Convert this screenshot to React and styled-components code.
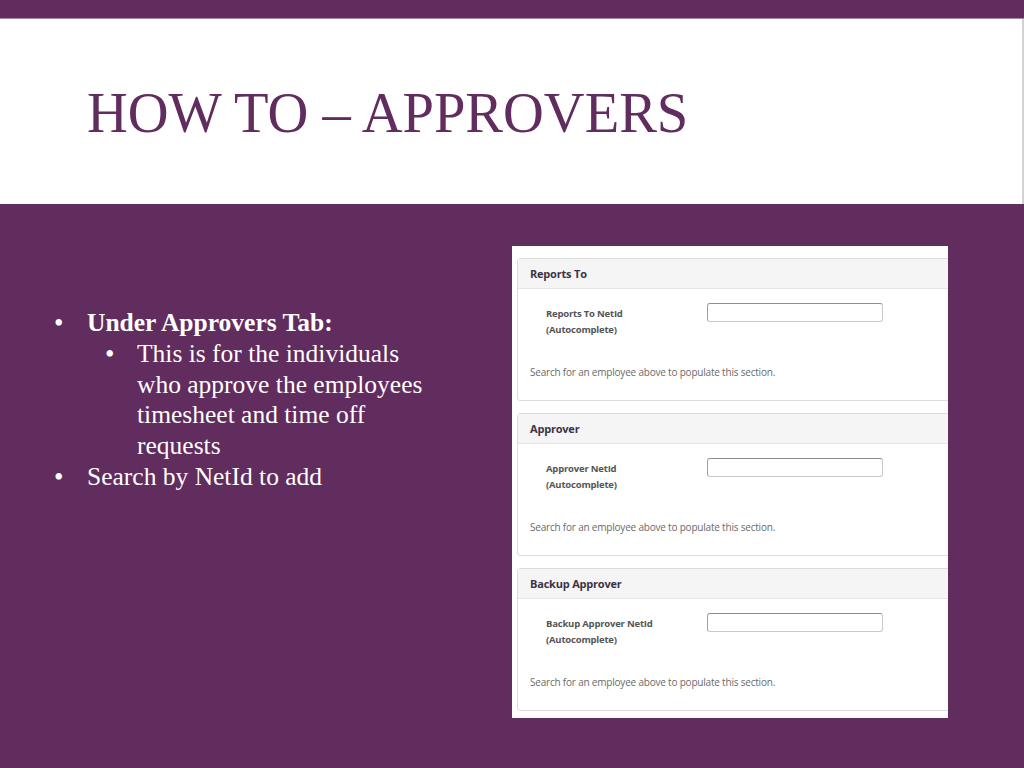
import React from "react";
import styled, { createGlobalStyle } from "styled-components";

const PURPLE = "#612c5e";

const Global = createGlobalStyle`
  html, body { margin: 0; padding: 0; }
  body { background: ${PURPLE}; }
  * { box-sizing: border-box; }
`;

const Slide = styled.div`
  width: 1024px;
  height: 768px;
  display: flex;
  flex-direction: column;
  background: ${PURPLE};
  overflow: hidden;
`;

const TopBar = styled.div`
  height: 19px;
  flex: none;
  background: ${PURPLE};
  border-bottom: 1px solid #a68aa4;
`;

const Header = styled.header`
  height: 185px;
  flex: none;
  background: #ffffff;
  border-right: 2px solid #d6d0d6;
  padding: 65px 0 0 87px;
`;

const Title = styled.h1`
  margin: 0;
  font-family: "Liberation Serif", "Times New Roman", serif;
  font-weight: 400;
  font-size: 56.5px;
  line-height: 59px;
  color: ${PURPLE};
  white-space: nowrap;
`;

const Main = styled.main`
  flex: 1;
  display: flex;
  align-items: flex-start;
  padding: 42px 0 0 0;
`;

const TextColumn = styled.div`
  width: 512px;
  flex: none;
  padding: 62px 0 0 54px;
  font-family: "Liberation Serif", "Times New Roman", serif;
  font-size: 25.5px;
  line-height: 30.8px;
  color: #ffffff;
`;

const Item = styled.div`
  display: flex;
  padding-left: ${(p) => p.$indent || 0}px;
`;

const Bullet = styled.span`
  width: ${(p) => p.$w}px;
  flex: none;
  font-size: 27px;
`;

const ItemText = styled.span`
  width: ${(p) => p.$w}px;
  font-weight: ${(p) => (p.$bold ? 700 : 400)};
`;

const Shot = styled.div`
  width: 436px;
  height: 472px;
  flex: none;
  background: #ffffff;
  overflow: hidden;
  padding: 12px 0 0 5px;
  display: flex;
  flex-direction: column;
  gap: 12px;
  font-family: "Open Sans", "Noto Sans", sans-serif;
`;

const Panel = styled.section`
  width: 450px;
  border: 1px solid #dcdcdc;
  border-radius: 3px;
  background: #fff;
`;

const PanelHead = styled.div`
  height: 30px;
  background: #f5f5f5;
  border-bottom: 1px solid #e6e6e6;
  padding: 0 12px;
  display: flex;
  align-items: center;
  font-size: 11px;
  font-weight: 700;
  color: #3a3346;
  letter-spacing: -0.2px;
`;

const PanelBody = styled.div`
  padding: 17px 0 20px 12px;
`;

const FieldRow = styled.div`
  display: flex;
  align-items: flex-start;
  padding-left: 16px;
`;

const Label = styled.div`
  width: 161px;
  flex: none;
  font-size: 9.5px;
  font-weight: 700;
  line-height: 16px;
  color: #555555;
  letter-spacing: -0.2px;
`;

const Input = styled.div`
  width: 176px;
  height: 19px;
  margin-top: -3px;
  border: 1px solid #c9c9c9;
  border-top-color: #8d8d8d;
  border-left-color: #a0a0a0;
  border-radius: 3px;
  background: #fff;
`;

const Help = styled.div`
  margin-top: 26px;
  font-size: 10px;
  line-height: 16px;
  color: #6a6a6a;
  letter-spacing: -0.2px;
`;

const panels = [
  { title: "Reports To", label: "Reports To NetId" },
  { title: "Approver", label: "Approver NetId" },
  { title: "Backup Approver", label: "Backup Approver NetId" },
];

export default function App() {
  return (
    <>
      <Global />
      <Slide>
        <TopBar />
        <Header>
          <Title>HOW TO – APPROVERS</Title>
        </Header>
        <Main>
          <TextColumn>
            <Item>
              <Bullet $w={33}>•</Bullet>
              <ItemText $w={380} $bold>Under Approvers Tab:</ItemText>
            </Item>
            <Item $indent={51}>
              <Bullet $w={32}>•</Bullet>
              <ItemText $w={296}>
                This is for the individuals who approve the employees timesheet and time off requests
              </ItemText>
            </Item>
            <Item>
              <Bullet $w={33}>•</Bullet>
              <ItemText $w={380}>Search by NetId to add</ItemText>
            </Item>
          </TextColumn>
          <Shot>
            {panels.map((p) => (
              <Panel key={p.title}>
                <PanelHead>{p.title}</PanelHead>
                <PanelBody>
                  <FieldRow>
                    <Label>
                      {p.label}
                      <br />
                      (Autocomplete)
                    </Label>
                    <Input />
                  </FieldRow>
                  <Help>Search for an employee above to populate this section.</Help>
                </PanelBody>
              </Panel>
            ))}
          </Shot>
        </Main>
      </Slide>
    </>
  );
}
